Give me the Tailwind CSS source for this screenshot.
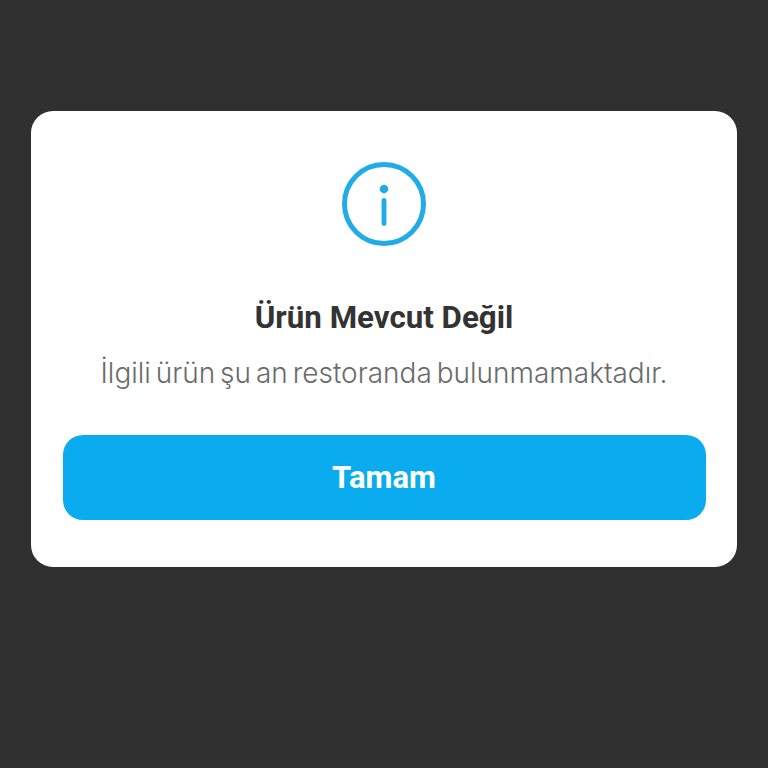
<!DOCTYPE html>
<html lang="tr">
<head>
<meta charset="utf-8">
<script src="https://cdn.jsdelivr.net/npm/@tailwindcss/browser@4"></script>
</head>
<body class="m-0">
<div class="w-[768px] h-[768px] bg-[#303030] px-[31px] pt-[111px]">
  <div class="h-[456px] bg-white rounded-[22px] px-[31.5px] pt-[51px] flex flex-col items-center">
    <svg class="w-[86px] h-[86px] block" viewBox="0 0 86 86" fill="none">
      <circle cx="43" cy="42" r="39.5" stroke="#21ace9" stroke-width="5"/>
      <circle cx="43" cy="27" r="4.3" fill="#21ace9"/>
      <path d="M43 38.5V61.5" stroke="#21ace9" stroke-width="4.8" stroke-linecap="round"/>
    </svg>
    <h1 class="mt-[50px] font-['Roboto',sans-serif] font-bold text-[31.3px] leading-[40px] text-[#333333] text-center">Ürün Mevcut Değil</h1>
    <p class="mt-[15px] font-['Inter',sans-serif] font-light text-[28px] leading-[40px] [word-spacing:-3px] text-[#6b6b6b] text-center whitespace-nowrap">İlgili ürün şu an restoranda bulunmamaktadır.</p>
    <button class="mt-[42px] w-full h-[85px] pt-[1px] rounded-[20px] bg-[#0aacef] text-white font-['Roboto',sans-serif] font-bold text-[31px]">Tamam</button>
  </div>
</div>
</body>
</html>
